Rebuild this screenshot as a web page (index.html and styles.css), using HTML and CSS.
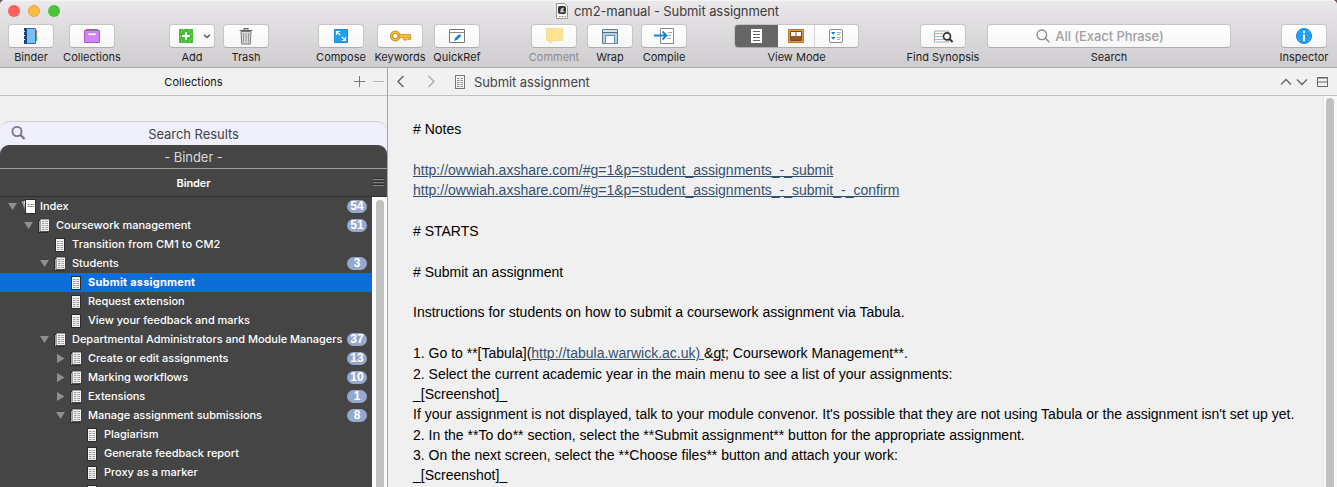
FILE: index.html
```html
<!DOCTYPE html>
<html lang="en">
<head>
<meta charset="utf-8">
<title>cm2-manual - Submit assignment</title>
<link rel="stylesheet" href="styles.css">
</head>
<body>
<svg class="defs" width="0" height="0">
  <symbol id="doc" viewBox="0 0 10 14">
    <rect x=".5" y=".5" width="9" height="13" fill="#f0f0f0" stroke="#2b2b2b"/>
    <path d="M2 3.500h6M2 5.500h6M2 7.500h6M2 9.500h6M2 11.500h6" stroke="#999" stroke-dasharray="2 .6 1 .6"/>
  </symbol>
  <symbol id="stack" viewBox="0 0 12 15">
    <rect x=".5" y="2.500" width="9" height="12" fill="#f4f4f4" stroke="#2b2b2b"/>
    <rect x="2" y="1" width="9.500" height="12.500" fill="#f0f0f0" stroke="#2b2b2b" stroke-width=".8"/>
    <path d="M4 3.500h6M4 5.500h6M4 7.500h6M4 9.500h6M4 11.500h6" stroke="#999" stroke-dasharray="2 .6 1 .6"/>
  </symbol>
  <symbol id="draft" viewBox="0 0 16 15">
    <path d="M.5 2.500l4-1.200 3 10-3.500 1z" fill="#e8e8e8" stroke="#2b2b2b" stroke-width=".6"/>
    <path d="M2.500 1.700l4-.7v13h-2.500z" fill="#f4f4f4" stroke="#2b2b2b" stroke-width=".6"/>
    <rect x="4.500" y=".5" width="10" height="14" fill="#fff" stroke="#2b2b2b"/>
    <path d="M6.500 5.500h2M9.500 5.500h3.500M6.500 7.500h6.500" stroke="#777" stroke-dasharray="2 .5"/>
  </symbol>
  <symbol id="down" viewBox="0 0 9 7"><path d="M0 0h9L4.500 7z" fill="#8f8f8f"/></symbol>
  <symbol id="right" viewBox="0 0 9 9"><path d="M1 0v9l7.500-4.500z" fill="#8f8f8f"/></symbol>
</svg>
<div class="window">
  <header class="chrome">
    <div class="titlebar">
      <div class="lights"><i class="red"></i><i class="amber"></i><i class="green"></i></div>
      <div class="title">
        <svg width="12" height="16" viewBox="0 0 12 16"><path d="M.5.5h8l3 3v12H.5z" fill="#f4f4f4" stroke="#999"/><rect x="2" y="3" width="8" height="8" rx="2" fill="#333"/><path d="M4 9.500l1-4 3-1-1 3 2 1.500" fill="#ccc"/><path d="M3 13.500h7" stroke="#999" stroke-dasharray="1 .5"/></svg>
        <span class="title-text">cm2-manual - Submit assignment</span>
      </div>
    </div>
    <div class="toolbar">
      <div class="tool t-binder"><div class="btn"><svg width="16" height="16" viewBox="0 0 16 16"><path d="M3 .5h9.500v15H3z" fill="#7bbcfa" stroke="#2870b8"/><path d="M13.500 2v4" stroke="#e55"/><path d="M13.500 6v7" stroke="#4b4"/><path d="M1 0h3v16H1z" fill="#174a7c"/><path d="M0 3.500h2M0 7.500h2M0 11.500h2" stroke="#eee"/></svg></div><span class="label">Binder</span></div>
      <div class="tool t-collections"><div class="btn"><svg width="16" height="16" viewBox="0 0 16 16"><path d="M2 1.500h5" stroke="#e34a57"/><path d="M7 1.500h7" stroke="#3caf52"/><path d="M.5 2.500h15v12H.5z" fill="#ce86f8" stroke="#a45acb"/><rect x="4" y="5" width="8" height="2.500" fill="#fff" stroke="#b468dc" stroke-width=".5"/></svg></div><span class="label">Collections</span></div>
      <div class="tool t-add"><div class="btn add"><svg width="14" height="14" viewBox="0 0 14 14"><path d="M0 0h14v14H0z" fill="#45bd34"/><path d="M7 3v8M3 7h8" stroke="#fff" stroke-width="2"/><path d="M2 3h1M4 1h1M10 2h1M12 5h1M1 8h1M2 12h1M6 13h1M10 12h1M12 10h1" stroke="#cfdc38"/></svg><svg width="8" height="5" viewBox="0 0 8 5"><path d="M1 .8l3 2.800 3-2.800" fill="none" stroke="#555" stroke-width="1.400"/></svg></div><span class="label">Add</span></div>
      <div class="tool t-trash"><div class="btn"><svg width="14" height="17" viewBox="0 0 14 17"><path d="M5 2V.7h4V2M.5 2.500h13" fill="none" stroke="#666" stroke-width="1.200"/><path d="M2 3.500h10l-.7 12.500H2.700z" fill="#d8d8d8" stroke="#777"/><path d="M4.500 5v9.500M7 5v9.500M9.500 5v9.500" stroke="#999"/></svg></div><span class="label">Trash</span></div>
      <div class="tool t-compose"><div class="btn"><svg width="14" height="14" viewBox="0 0 14 14"><path d="M.5.5h13v13H.5z" fill="#22a0f5" stroke="#178bda"/><path d="M2.500 6V2.500H6M2.500 2.500l3.700 3.700M11.500 8v3.500H8M11.500 11.500L7.800 7.800" fill="none" stroke="#fff" stroke-width="1.200"/></svg></div><span class="label">Compose</span></div>
      <div class="tool t-keywords"><div class="btn"><svg width="21" height="12" viewBox="0 0 21 12"><circle cx="5.300" cy="6" r="3.800" fill="none" stroke="#c78b14" stroke-width="3.200"/><circle cx="5.300" cy="6" r="3.800" fill="none" stroke="#f6be3c" stroke-width="1.400"/><path d="M9 4.500h11.500v5h-2V7.500h-1.500V10H13.500V7.500H9z" fill="#f6be3c" stroke="#d2961d" stroke-width=".9"/></svg></div><span class="label">Keywords</span></div>
      <div class="tool t-quick"><div class="btn"><svg width="16" height="14" viewBox="0 0 16 14"><path d="M.5.5h15v13H.5z" fill="#fff" stroke="#777"/><path d="M1 3.500h14" stroke="#888"/><path d="M5 12l1-3 4.300-4 2 2-4.300 4z" fill="#1688dc"/></svg></div><span class="label">QuickRef</span></div>
      <div class="tool t-comment"><div class="btn"><svg width="17" height="16" viewBox="0 0 17 16"><path d="M.5.5h16v12H7.500L3.500 15.500v-3h-3z" fill="#fee391" stroke="#f3d280" stroke-dasharray="2 1"/></svg></div><span class="label dim">Comment</span></div>
      <div class="tool t-wrap"><div class="btn"><svg width="16" height="15" viewBox="0 0 16 15"><path d="M.5.5h15v14H.5z" fill="#a5d6f5" stroke="#5c7d94"/><path d="M1 1h14v2H1z" fill="#e4e4e4"/><path d="M0 3.500h16" stroke="#666"/><path d="M3.500 6.500h9v8h-9z" fill="#fff" stroke="#6b8ca5"/></svg></div><span class="label">Wrap</span></div>
      <div class="tool t-compile"><div class="btn"><svg width="20" height="16" viewBox="0 0 20 16"><path d="M6.500 .5h13v15h-13z" fill="#fff" stroke="#888"/><path d="M14 4.500h4M14 7.500h3M13 10.500h4" stroke="#aaa"/><path d="M0 7.500h12M8.500 3.500l4 4-4 4" fill="none" stroke="#1585d4" stroke-width="1.800"/></svg></div><span class="label">Compile</span></div>
      <div class="tool t-view"><div class="segments"><div class="seg on"><svg width="11" height="14" viewBox="0 0 11 14"><path d="M0 0h11v14H0z" fill="#fff"/><path d="M2 2.500h7M2 5.500h7M2 8.500h7M2 11.500h7" stroke="#666"/></svg></div><div class="seg mid"><svg width="16" height="14" viewBox="0 0 16 14"><path d="M.5.5h15v13H.5z" fill="#e69a45" stroke="#be762c"/><path d="M2.500 2.500h11v9h-11z" fill="#91582a" stroke="#7a4718"/><path d="M3 3h4.500v4H3zM8.500 3H13v4H8.500z" fill="#fff"/></svg></div><div class="seg last"><svg width="14" height="14" viewBox="0 0 14 14"><rect x=".5" y=".5" width="13" height="13" rx="1.500" fill="#fff" stroke="#888"/><path d="M2 3h4.500L4.200 5.800zM2 8h4.500l-2.300 2.800z" fill="#0c83d6"/><path d="M8 3.500h4M8 5.500h3M8 8.500h4M8 10.500h3" stroke="#aaa"/></svg></div></div><span class="label">View Mode</span></div>
      <div class="tool t-find"><div class="btn"><svg width="19" height="13" viewBox="0 0 19 13"><path d="M.5 1h14v11H.5z" fill="#fff" stroke="#aaa"/><path d="M1 3.500h8" stroke="#f0a595"/><path d="M1 6.500h8M1 9.500h9" stroke="#8abfe9"/><circle cx="13" cy="6.300" r="3.500" fill="#fff" stroke="#333" stroke-width="1.700"/><path d="M15.500 9l3 3" stroke="#333" stroke-width="2"/></svg></div><span class="label">Find Synopsis</span></div>
      <div class="tool t-search"><div class="field"><svg width="14" height="14" viewBox="0 0 14 14"><circle cx="5.800" cy="5.800" r="4.800" fill="none" stroke="#8a8a8a" stroke-width="1.300"/><path d="M9.300 9.300l4 4" stroke="#8a8a8a" stroke-width="1.400"/></svg><span class="ph">All (Exact Phrase)</span></div><span class="label">Search</span></div>
      <div class="tool t-inspect"><div class="btn"><svg width="16" height="16" viewBox="0 0 16 16"><circle cx="8" cy="8" r="7.500" fill="#27a1f5" stroke="#1780d2"/><path d="M7 3h2v2H7zM7 6.500h2V13H7z" fill="#fff"/></svg></div><span class="label">Inspector</span></div>
    </div>
  </header>
  <div class="body">
    <aside class="sidebar">
      <div class="coll-head"><span class="coll-title">Collections</span><svg width="30" height="13" viewBox="0 0 30 13"><path d="M0 6.500h11M5.500 1v11" stroke="#777"/><path d="M19 6.500h11" stroke="#b5b5b5"/></svg></div>
      <div class="tabs">
        <div class="tab-search"><svg width="15" height="15" viewBox="0 0 15 15"><circle cx="6" cy="5.500" r="4.600" fill="none" stroke="#77777c" stroke-width="1.800"/><path d="M9.500 9l4 4" stroke="#77777c" stroke-width="2.400"/></svg><span class="tab-text">Search Results</span></div>
        <div class="tab-binder"><span class="tab-text">- Binder -</span></div>
      </div>
      <div class="binder-head"><span class="bh">Binder</span><svg width="11" height="9" viewBox="0 0 11 9"><path d="M0 .5h11M0 3.500h11M0 6.500h11" stroke="#2c2d34"/><path d="M0 1.500h11M0 4.500h11M0 7.500h11" stroke="#85868a"/></svg></div>
      <div class="tree-wrap">
        <div class="tree">
          <div class="row d0"><span class="arrow"><svg width="9" height="7"><use href="#down"/></svg></span><span class="ico"><svg width="16" height="15"><use href="#draft"/></svg></span><span class="name">Index</span><span class="badge">54</span></div>
          <div class="row d1"><span class="arrow"><svg width="9" height="7"><use href="#down"/></svg></span><span class="ico"><svg width="12" height="15"><use href="#stack"/></svg></span><span class="name">Coursework management</span><span class="badge">51</span></div>
          <div class="row d2"><span class="arrow"></span><span class="ico"><svg width="10" height="14"><use href="#doc"/></svg></span><span class="name wide">Transition from CM1 to CM2</span></div>
          <div class="row d2"><span class="arrow"><svg width="9" height="7"><use href="#down"/></svg></span><span class="ico"><svg width="12" height="15"><use href="#stack"/></svg></span><span class="name">Students</span><span class="badge">3</span></div>
          <div class="row d3 selected"><span class="arrow"></span><span class="ico"><svg width="10" height="14"><use href="#doc"/></svg></span><span class="name">Submit assignment</span></div>
          <div class="row d3"><span class="arrow"></span><span class="ico"><svg width="10" height="14"><use href="#doc"/></svg></span><span class="name">Request extension</span></div>
          <div class="row d3"><span class="arrow"></span><span class="ico"><svg width="10" height="14"><use href="#doc"/></svg></span><span class="name">View your feedback and marks</span></div>
          <div class="row d2"><span class="arrow"><svg width="9" height="7"><use href="#down"/></svg></span><span class="ico"><svg width="12" height="15"><use href="#stack"/></svg></span><span class="name">Departmental Administrators and Module Managers</span><span class="badge">37</span></div>
          <div class="row d3"><span class="arrow"><svg width="9" height="9"><use href="#right"/></svg></span><span class="ico"><svg width="12" height="15"><use href="#stack"/></svg></span><span class="name">Create or edit assignments</span><span class="badge">13</span></div>
          <div class="row d3"><span class="arrow"><svg width="9" height="9"><use href="#right"/></svg></span><span class="ico"><svg width="12" height="15"><use href="#stack"/></svg></span><span class="name">Marking workflows</span><span class="badge">10</span></div>
          <div class="row d3"><span class="arrow"><svg width="9" height="9"><use href="#right"/></svg></span><span class="ico"><svg width="12" height="15"><use href="#stack"/></svg></span><span class="name">Extensions</span><span class="badge">1</span></div>
          <div class="row d3"><span class="arrow"><svg width="9" height="7"><use href="#down"/></svg></span><span class="ico"><svg width="12" height="15"><use href="#stack"/></svg></span><span class="name">Manage assignment submissions</span><span class="badge">8</span></div>
          <div class="row d4"><span class="arrow"></span><span class="ico"><svg width="10" height="14"><use href="#doc"/></svg></span><span class="name">Plagiarism</span></div>
          <div class="row d4"><span class="arrow"></span><span class="ico"><svg width="10" height="14"><use href="#doc"/></svg></span><span class="name">Generate feedback report</span></div>
          <div class="row d4"><span class="arrow"></span><span class="ico"><svg width="10" height="14"><use href="#doc"/></svg></span><span class="name">Proxy as a marker</span></div>
          <div class="row d4"><span class="arrow"></span><span class="ico"><svg width="10" height="14"><use href="#doc"/></svg></span><span class="name">Add marks feedback</span></div>
        </div>
        <div class="track side"><div class="thumb"></div></div>
      </div>
    </aside>
    <main class="editor">
      <div class="ed-head">
        <svg class="nav" width="39" height="13" viewBox="0 0 39 13"><path d="M6.500 1L1 6.500 6.500 12" fill="none" stroke="#666" stroke-width="1.500"/><path d="M31.500 1l5.500 5.500L31.500 12" fill="none" stroke="#aaa" stroke-width="1.300"/></svg>
        <svg class="ed-doc" width="10" height="14" viewBox="0 0 10 14"><rect x=".5" y=".5" width="9" height="13" fill="#f4f4f4" stroke="#777"/><path d="M2 3.500h6M2 5.500h6M2 7.500h6M2 9.500h6M2 11.500h6" stroke="#888" stroke-dasharray="2 .6 1 .6"/></svg>
        <span class="ed-title">Submit assignment</span>
        <svg class="ed-tools" width="48" height="12" viewBox="0 0 48 12"><path d="M1 8.500l5-5 5 5M17 3.500l5 5 5-5" fill="none" stroke="#666" stroke-width="1.400"/><path d="M37.500 1.500h10v9h-10zM37 6h11M37 2h11" fill="none" stroke="#666"/></svg>
      </div>
      <div class="ed-body">
        <div class="text">
          <p># Notes</p>
          <p></p>
          <p><a>http://owwiah.axshare.com/#g=1&amp;p=student_assignments_-_submit</a></p>
          <p><a>http://owwiah.axshare.com/#g=1&amp;p=student_assignments_-_submit_-_confirm</a></p>
          <p></p>
          <p># STARTS</p>
          <p></p>
          <p># Submit an assignment</p>
          <p></p>
          <p>Instructions for students on how to submit a coursework assignment via Tabula.</p>
          <p></p>
          <p>1. Go to **[Tabula](<a>http://tabula.warwick.ac.uk) </a>&amp;<span class="spell">gt</span>; Coursework Management**.</p>
          <p>2. Select the current academic year in the main menu to see a list of your assignments:</p>
          <p>_[Screenshot]_</p>
          <p>If your assignment is not displayed, talk to your module convenor. It's possible that they are not using Tabula or the assignment isn't set up yet.</p>
          <p>2. In the **To do** section, select the **Submit assignment** button for the appropriate assignment.</p>
          <p>3. On the next screen, select the **Choose files** button and attach your work:</p>
          <p>_[Screenshot]_</p>
        </div>
        <div class="track main"><div class="thumb"></div></div>
      </div>
    </main>
  </div>
</div>
</body>
</html>
```
FILE: styles.css
```css
* { box-sizing: border-box; }
body { margin: 0; background: #76545a; font-family: Inter, "Liberation Sans", sans-serif; overflow: hidden; }
svg { display: block; flex: none; }
.defs { position: absolute; }
.window { width: 1337px; height: 487px; display: flex; flex-direction: column; overflow: hidden; border-radius: 5px 5px 0 0; background: #f0f0f0; }
.chrome { height: 68px; flex: none; background: linear-gradient(#ebe9eb, #e2e0e2 25%, #cfcdcf); border-top: 1px solid #f6f5f6; border-bottom: 1px solid #a9a8a9; }
.titlebar { height: 22px; display: flex; align-items: center; }
.lights { display: flex; gap: 8px; padding-left: 8px; width: 556px; margin-top: -2px; }
.lights i { width: 12px; height: 12px; border-radius: 50%; }
.red { background: #fb5f5a; }
.amber { background: #fdbc40; border: 1px solid #e5a63c; }
.green { background: #4ac23c; }
.title { display: flex; align-items: center; gap: 6px; margin-top: -2px; }
.title-text { font-size: 13px; letter-spacing: -.09px; color: #3c3b3c; white-space: nowrap; }
.toolbar { display: flex; padding-top: 1px; }
.tool { width: 46px; flex: none; display: flex; flex-direction: column; align-items: center; }
.btn, .segments, .field { width: 100%; height: 24px; display: flex; align-items: center; justify-content: center; border: 1px solid #c6c5c6; border-bottom-color: #aeadae; border-radius: 4px; background: linear-gradient(#fff, #f6f6f6); }
.btn.add { gap: 10px; padding-left: 5px; }
.label { font-size: 11px; line-height: 14px; margin-top: 2px; color: #1f1f1f; white-space: nowrap; }
.label.dim { color: #8b8a8b; }
.t-binder { margin-left: 8px; }
.t-collections { margin-left: 15px; }
.t-add { margin-left: 54px; }
.t-trash { margin-left: 8px; }
.t-compose { margin-left: 49px; }
.t-keywords { margin-left: 13px; }
.t-quick { margin-left: 11px; }
.t-comment { margin-left: 51px; }
.t-wrap { margin-left: 10px; }
.t-compile { margin-left: 8px; }
.t-view { margin-left: 47px; width: 125px; }
.t-find { margin-left: 61px; }
.t-search { margin-left: 21px; width: 244px; }
.t-inspect { margin-left: 50px; }
.segments { overflow: hidden; justify-content: flex-start; }
.seg { flex: 1; height: 100%; display: flex; align-items: center; justify-content: center; }
.seg.on { flex: none; width: 43px; background: #666; }
.seg.mid { flex: none; width: 37px; border-right: 1px solid #d2d2d2; }
.seg.last { padding-right: 2px; }
.t-search .field { gap: 5px; padding-right: 18px; }
.ph { font-size: 13px; letter-spacing: -.08px; color: #a0a0a0; font-weight: 500; }
.body { flex: 1; display: flex; min-height: 0; }
.sidebar { width: 388px; flex: none; border-right: 1px solid #a5a5a5; display: flex; flex-direction: column; }
.coll-head { height: 28px; flex: none; border-bottom: 1px solid #c2c3c5; display: grid; grid-template-columns: 1fr auto 1fr; align-items: center; }
.coll-title { grid-column: 2; font-size: 11px; letter-spacing: .05px; color: #111; }
.coll-head svg { justify-self: end; margin-right: 3px; }
.tabs { padding-top: 25px; flex: none; }
.tab-search { height: 35px; padding: 0 11px 10px; border-top: 1px solid #cfcfcf; border-radius: 10px 10px 0 0; background: #efeffb; display: grid; grid-template-columns: 1fr auto 1fr; align-items: center; color: #424248; }
.tab-search svg { margin-top: -2px; }
.tab-text { font-size: 13px; letter-spacing: -.05px; }
.tab-binder { height: 24px; margin-top: -11px; border-radius: 9px 9px 0 0; background: #454545; border-bottom: 1px solid #a0a0a0; display: flex; align-items: center; justify-content: center; color: #d8d8d8; }
.binder-head { height: 28px; flex: none; background: #454545; border-bottom: 1px solid #303030; display: grid; grid-template-columns: 1fr auto 1fr; align-items: center; padding: 0 3px; color: #fff; }
.bh { grid-column: 2; font-size: 11px; font-weight: 600; letter-spacing: -.1px; }
.binder-head svg { justify-self: end; }
.tree-wrap { flex: 1; display: flex; min-height: 0; }
.tree { width: 372px; flex: none; background: #454545; overflow: hidden; }
.row { height: 19px; display: flex; align-items: center; padding-right: 5px; color: #fff; font-size: 11px; }
.selected { background: #0f6dd9; }
.d0 { padding-left: 8px; }
.d1 { padding-left: 24px; }
.d2 { padding-left: 40px; }
.d3 { padding-left: 56px; }
.d4 { padding-left: 72px; }
.arrow { width: 12px; flex: none; }
.ico { width: 20px; flex: none; display: flex; padding-left: 2px; }
.ico svg[width="10"] { margin-left: 1px; }
.ico svg[width="16"] { margin-left: -1px; }
.name { white-space: nowrap; font-weight: 500; letter-spacing: -.03px; padding-bottom: 2px; }
.name.wide { letter-spacing: .08px; }
.selected .name { font-weight: 700; letter-spacing: .22px; }
.badge { margin-left: auto; width: 20px; height: 13px; border-radius: 7px; background: #95a9cf; font: bold 12px/13px "Liberation Sans", Arial, sans-serif; text-align: center; flex: none; }
.track { width: 15px; flex: none; background: #fafafa; padding: 3px 3px 0 4px; }
.thumb { width: 8px; height: 100%; border-radius: 4px 4px 0 0; background: #c1c1c1; }
.editor { flex: 1; min-width: 0; display: flex; flex-direction: column; }
.ed-head { height: 28px; flex: none; display: flex; align-items: center; border-bottom: 1px solid #c2c3c5; background: #f1f1f1; }
.nav { margin-left: 9px; }
.ed-doc { margin-left: 19px; }
.ed-title { font-size: 13px; letter-spacing: -.09px; margin-left: 9px; color: #444; }
.ed-tools { margin-left: auto; margin-right: 9px; }
.ed-body { flex: 1; display: flex; min-height: 0; }
.text { flex: 1; padding: 23px 0 0 25px; overflow: hidden; font-family: "Liberation Sans", Arial, sans-serif; font-size: 14px; color: #000; }
.text p { margin: 0; height: 20.39px; line-height: 20.4px; white-space: pre; }
.text a { color: #34506f; text-decoration: underline; }
.spell { text-decoration: underline dotted #e03b35 2px; text-decoration-skip-ink: none; }
.main { border-left: 1px solid #e6e6e6; padding: 2px 3px 0 2px; width: 14px; }
```
